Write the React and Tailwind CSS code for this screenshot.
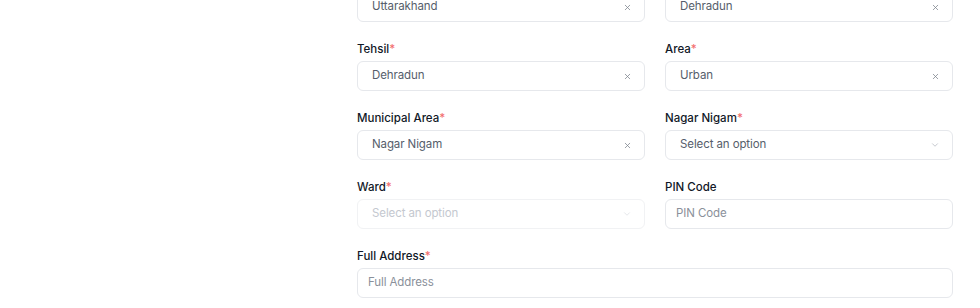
import React from "react";
import { X, ChevronDown } from "lucide-react";

const Label = ({ text, required }) => (
  <label className="block h-4 mb-[4px] text-[11.5px] leading-4 font-medium text-[#111827]">
    {text}
    {required && <span className="text-[#f26d6d]">*</span>}
  </label>
);

// select-like box, with a value (clear icon) or a placeholder (chevron)
const SelectBox = ({ value, placeholder = "Select an option", disabled }) => (
  <div
    className={`flex items-center justify-between h-[30px] pl-[14px] pr-[12px] rounded-md border bg-white text-[11.5px] tracking-[-0.1px] ${
      disabled ? "border-[#f1f2f4]" : "border-[#e6e8ec]"
    }`}
  >
    <span className={disabled ? "text-[#c4c8cf]" : "text-[#565e6b]"}>
      {value || placeholder}
    </span>
    {value ? (
      <X size={9} strokeWidth={2} className="text-[#7b818b]" />
    ) : (
      <ChevronDown size={10} strokeWidth={1.5} className={disabled ? "text-[#d6d9de]" : "text-[#a3a9b2]"} />
    )}
  </div>
);

const TextBox = ({ placeholder }) => (
  <div className="flex items-center h-[30px] px-[10px] rounded-md border border-[#e6e8ec] bg-white text-[11.5px] tracking-[-0.1px] text-[#8a909a]">
    {placeholder}
  </div>
);

export default function App() {
  return (
    <div className="w-[980px] h-[308px] overflow-hidden bg-white" style={{ fontFamily: "Inter, 'Noto Sans', sans-serif" }}>
      <div className="ml-[357px] w-[596px] -mt-[28px] flex flex-col gap-[19px]">
        <div className="grid grid-cols-2 gap-x-[20px]">
          <div>
            <Label text="State" required />
            <SelectBox value="Uttarakhand" />
          </div>
          <div>
            <Label text="District" required />
            <SelectBox value="Dehradun" />
          </div>
        </div>
        <div className="grid grid-cols-2 gap-x-[20px]">
          <div>
            <Label text="Tehsil" required />
            <SelectBox value="Dehradun" />
          </div>
          <div>
            <Label text="Area" required />
            <SelectBox value="Urban" />
          </div>
        </div>
        <div className="grid grid-cols-2 gap-x-[20px]">
          <div>
            <Label text="Municipal Area" required />
            <SelectBox value="Nagar Nigam" />
          </div>
          <div>
            <Label text="Nagar Nigam" required />
            <SelectBox />
          </div>
        </div>
        <div className="grid grid-cols-2 gap-x-[20px]">
          <div>
            <Label text="Ward" required />
            <SelectBox disabled />
          </div>
          <div>
            <Label text="PIN Code" />
            <TextBox placeholder="PIN Code" />
          </div>
        </div>
        <div>
          <Label text="Full Address" required />
          <TextBox placeholder="Full Address" />
        </div>
      </div>
    </div>
  );
}
